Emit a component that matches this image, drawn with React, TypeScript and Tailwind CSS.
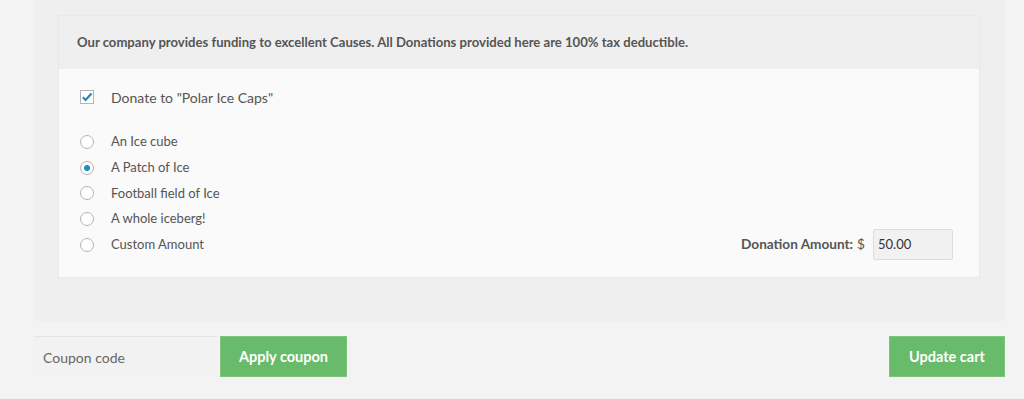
import React from "react";

const options = ["An Ice cube", "A Patch of Ice", "Football field of Ice", "A whole iceberg!", "Custom Amount"];

export default function App() {
  return (
    <div className="w-[1024px] h-[399px] bg-[#f3f3f3] text-[#555] overflow-hidden" style={{ fontFamily: "Lato, 'Noto Sans', sans-serif" }}>
      <div className="ml-[34px] w-[971px] h-[321px] bg-[#efefef] pt-[15px] pl-[24px]">
        <div className="w-[922px] border border-[#e9e9e9]">
          <div className="h-[53px] flex items-center pl-[18px] text-[13.1px] font-bold text-[#555] bg-[#efefef]">
            Our company provides funding to excellent Causes. All Donations provided here are 100% tax deductible.
          </div>
          <div className="bg-[#fafafa] h-[208px] pl-[21px] pr-[26px] pt-[20px] relative">
            <div className="flex items-center h-[16px]">
              <div className="w-[14px] h-[14px] border border-[#b4b4b4] bg-white flex items-center justify-center">
                <svg width="12" height="12" viewBox="0 0 12 12"><path d="M1.8 6.2 L4.6 9 L10.5 2.4" fill="none" stroke="#1e8cbe" strokeWidth="2.2" /></svg>
              </div>
              <span className="ml-[17px] text-[14px] text-[#555]">Donate to "Polar Ice Caps"</span>
            </div>
            <div className="mt-[24px] flex flex-col">
              {options.map((o, i) => (
                <div key={o} className="flex items-center h-[25.75px]">
                  <div className="w-[14px] h-[14px] rounded-full border border-[#b4b4b4] bg-white flex items-center justify-center">
                    {i === 1 && <div className="w-[6px] h-[6px] rounded-full bg-[#1e8cbe]" />}
                  </div>
                  <span className="ml-[17px] text-[13px] text-[#555]">{o}</span>
                </div>
              ))}
            </div>
            <div className="absolute right-[26px] top-[160px] flex items-center">
              <span className="text-[13.6px] font-bold text-[#555]">Donation Amount:</span>
              <span className="ml-[4px] text-[13.6px] text-[#555]">$</span>
              <div className="ml-[8px] w-[80px] h-[31px] border border-[#ddd] rounded-[2px] bg-[#f1f1f1] flex items-center pl-[4px] text-[13px] text-[#333]">50.00</div>
            </div>
          </div>
        </div>
      </div>
      <div className="mt-[15px] ml-[34px] w-[971px] flex items-center">
        <div className="w-[183px] h-[41px] bg-[#f2f2f2] border-t border-[#e5e5e5] flex items-center pl-[9px] text-[14px] text-[#666]">Coupon code</div>
        <button className="ml-[3px] w-[127px] h-[41px] bg-[#67bb6a] border border-[#7cc47e] text-white text-[14.5px] font-bold">Apply coupon</button>
        <div className="flex-1" />
        <button className="w-[116px] h-[41px] bg-[#67bb6a] border border-[#7cc47e] text-white text-[14.5px] font-bold">Update cart</button>
      </div>
    </div>
  );
}
